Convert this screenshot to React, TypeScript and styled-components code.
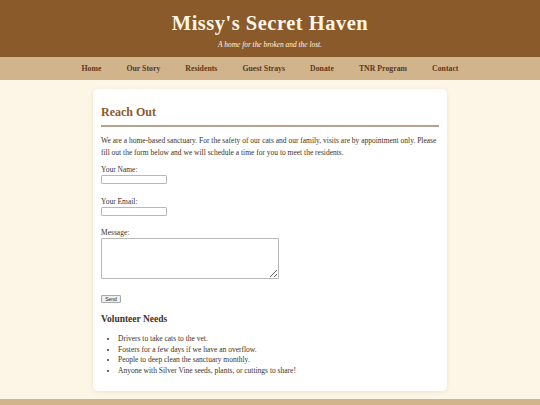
import React from 'react';
import styled, { createGlobalStyle } from 'styled-components';

const GlobalStyle = createGlobalStyle`
  html, body {
    margin: 0;
    padding: 0;
    background: #fdf5e6;
  }
  body {
    font-family: 'Liberation Serif', 'Times New Roman', serif;
    color: #3e3227;
  }
`;

const Page = styled.div`
  min-height: 405px;
  display: flex;
  flex-direction: column;
`;

const Header = styled.header`
  background: #8b5a2b;
  color: #fdf5e6;
  text-align: center;
  padding: 11px 0 9px;
  height: 57px;
  box-sizing: border-box;
`;

const Title = styled.h1`
  margin: 0;
  font-size: 20.5px;
  font-weight: bold;
  letter-spacing: 0.5px;
  line-height: 24px;
`;

const Tagline = styled.p`
  margin: 5px 0 0;
  font-size: 7.4px;
  font-style: italic;
`;

const Nav = styled.nav`
  background: #d2b48c;
  height: 23px;
  display: flex;
  justify-content: center;
  align-items: center;
`;

const NavLink = styled.a`
  color: #5a3a1e;
  font-weight: bold;
  font-size: 7.8px;
  text-decoration: none;
  padding: 0 12.5px;
`;

const Main = styled.main`
  flex: 1;
  padding: 9px 0 8px;
`;

const Card = styled.section`
  width: 354px;
  margin: 0 auto;
  background: #fff;
  border-radius: 5px;
  box-shadow: 0 1px 4px rgba(120, 90, 50, 0.12);
  padding: 16px 8px 15px;
  box-sizing: border-box;
`;

const Heading = styled.h2`
  margin: 0;
  color: #8b5a2b;
  font-size: 12px;
  font-weight: bold;
  padding-bottom: 5px;
  border-bottom: 2px solid #b3a491;
`;

const Intro = styled.p`
  margin: 8px 0 0;
  font-size: 7.5px;
  line-height: 12px;
`;

const Form = styled.form`
  display: flex;
  flex-direction: column;
  align-items: flex-start;
  margin-top: 6px;
`;

const Label = styled.label<{ $gap?: number }>`
  font-size: 7.5px;
  line-height: 10px;
  margin-top: ${({ $gap }) => $gap ?? 0}px;
`;

const TextInput = styled.input`
  width: 66px;
  height: 9px;
  margin: 0;
  padding: 0;
  border: 1px solid #b8b8b8;
  border-radius: 1px;
  box-sizing: border-box;
`;

const TextArea = styled.textarea`
  width: 178px;
  height: 41px;
  margin: 0;
  padding: 0;
  border: 1px solid #b8b8b8;
  border-radius: 1px;
  box-sizing: border-box;
  resize: both;
`;

const SendButton = styled.button`
  margin-top: 16px;
  font-family: 'Liberation Sans', Arial, sans-serif;
  font-size: 5px;
  height: 8px;
  width: 20px;
  padding: 0;
  line-height: 6px;
  border: 1px solid #aaa;
  border-radius: 1px;
  background: #efefef;
  color: #222;
`;

const SubHeading = styled.h3`
  margin: 11px 0 0;
  font-size: 9.5px;
  font-weight: bold;
`;

const NeedsList = styled.ul`
  margin: 10px 0 0;
  padding-left: 17px;
  font-size: 7.5px;
  line-height: 10.6px;
`;

const Footer = styled.footer`
  background: #d2b48c;
  height: 7px;
`;

const links = ['Home', 'Our Story', 'Residents', 'Guest Strays', 'Donate', 'TNR Program', 'Contact'];

const needs = [
  'Drivers to take cats to the vet.',
  'Fosters for a few days if we have an overflow.',
  'People to deep clean the sanctuary monthly.',
  'Anyone with Silver Vine seeds, plants, or cuttings to share!',
];

export default function App() {
  return (
    <Page>
      <GlobalStyle />
      <Header>
        <Title>Missy's Secret Haven</Title>
        <Tagline>A home for the broken and the lost.</Tagline>
      </Header>
      <Nav>
        {links.map((l) => (
          <NavLink key={l} href="#">
            {l}
          </NavLink>
        ))}
      </Nav>
      <Main>
        <Card>
          <Heading>Reach Out</Heading>
          <Intro>
            We are a home-based sanctuary. For the safety of our cats and our family, visits are by appointment
            only. Please fill out the form below and we will schedule a time for you to meet the residents.
          </Intro>
          <Form onSubmit={(e) => e.preventDefault()}>
            <Label htmlFor="name">Your Name:</Label>
            <TextInput id="name" type="text" />
            <Label htmlFor="email" $gap={13}>Your Email:</Label>
            <TextInput id="email" type="email" />
            <Label htmlFor="msg" $gap={12}>Message:</Label>
            <TextArea id="msg" />
            <SendButton type="submit">Send</SendButton>
          </Form>
          <SubHeading>Volunteer Needs</SubHeading>
          <NeedsList>
            {needs.map((n) => (
              <li key={n}>{n}</li>
            ))}
          </NeedsList>
        </Card>
      </Main>
      <Footer />
    </Page>
  );
}
